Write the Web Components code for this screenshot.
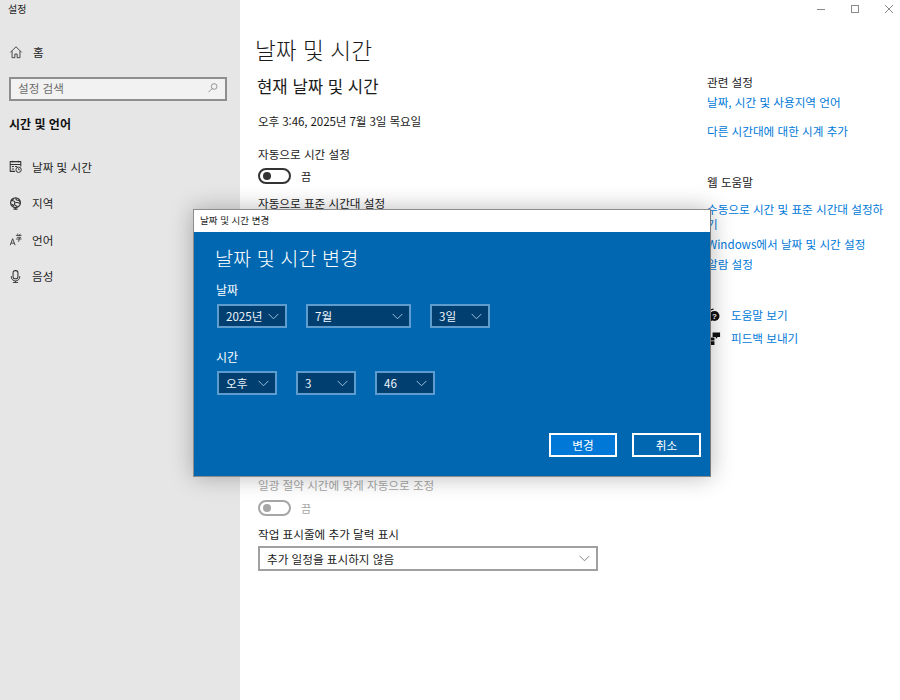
<!DOCTYPE html>
<html lang="ko">
<head>
<meta charset="utf-8">
<title>설정</title>
<style>
  html, body { margin: 0; height: 100%; }
  body { font-family: "Noto Sans CJK KR", "Noto Sans", sans-serif; color: #1a1a1a; background: #fff; overflow: hidden; }
</style>
</head>
<body>
<settings-window>
  <side-nav slot="nav"></side-nav>
  <date-pane slot="main"></date-pane>
  <related-pane slot="aside"></related-pane>
  <window-controls slot="controls"></window-controls>
  <change-dialog slot="dialog"></change-dialog>
</settings-window>

<script>
const icons = {
  home: '<path d="M1.5 8.5 8 2l6.5 6.5M3.5 7v7.5h3.2v-4.2h2.6v4.2h3.2V7" fill="none" stroke="currentColor"/>',
  search: '<circle cx="9.5" cy="6" r="3.8" fill="none" stroke="currentColor"/><path d="M6.8 8.8 2 13.6" stroke="currentColor" fill="none"/>',
  clock: '<path d="M7.500 14H1.500V2h13v6M1.500 5.500h13M4.500 .8v2.400M11.500 .8v2.400M3.500 8h2.500M7.500 8h2.500M3.500 11h2.500" fill="none" stroke="currentColor" stroke-width="1.300"/><circle cx="11.800" cy="12" r="3.300" fill="#e6e6e6" stroke="currentColor" stroke-width="1.200"/><path d="M11.800 10v2h1.600" fill="none" stroke="currentColor"/>',
  region: '<circle cx="8" cy="7" r="6" fill="none" stroke="currentColor" stroke-width="1.500"/><path d="M3 4c2 1 3 .5 4 2s-1 2 0 3.500 3 1 3.500 3M9 1.500c-1 1.500 0 2.500 1.500 2.500s2.500 .5 3 2M5 2c.5 1.500-.5 2-2.400 2.500M8 7c1.500-.5 3-.5 5.800 1M3 9c1.500 0 2.500.5 3 2.500" fill="none" stroke="currentColor" stroke-width="1.400"/><path d="M5.500 15h5M8 13v2" stroke="currentColor" stroke-width="1.500"/>',
  lang: '<path d="M1.500 15 4.500 7 7.500 15M2.700 12.500h3.600" fill="none" stroke="currentColor" stroke-width="1.100"/><path d="M8.500 3h7M10.500 .8l.8 2.200M13.700 .8l-.8 2.200M9.800 5.300h4.700l-2.200 1.700v3l-1.300.4M8.500 7.400h7" fill="none" stroke="currentColor"/>',
  mic: '<rect x="5" y=".8" width="6" height="10" rx="2.500" fill="none" stroke="currentColor" stroke-width="1.300"/><path d="M2.800 7.500v1a5.200 5 0 0 0 10.400 0v-1M8 13.500V15.500M4.800 15.500h6.400" fill="none" stroke="currentColor" stroke-width="1.200"/>',
  help: '<circle cx="9" cy="8.500" r="5.400" fill="currentColor"/><path d="M4.500 12 3.500 15l3.500-2z" fill="currentColor"/><text x="9" y="11.500" font-size="8.500" font-weight="700" text-anchor="middle" fill="#fff" font-family="Liberation Sans">?</text><path d="M2 8A6.500 6.500 0 0 1 8 1.200" fill="none" stroke="currentColor" stroke-width="1.200"/>',
  feedback: '<path d="M7 1.500h8v5h-2.500L10.500 8.500V6.500H7zM3.500 7H9v3H3.500zM3.500 11H9v3.800H3.500z" fill="currentColor"/>'
};
const svg = (name, size = 16) => `<svg width="${size}" height="${size}" viewBox="0 0 16 16" aria-hidden="true">${icons[name]}</svg>`;
const chevron = (w = 12) => `<svg width="${w}" height="7" viewBox="0 0 12 7" aria-hidden="true"><path d="M.7.7 6 6 11.300.7" fill="none" stroke="currentColor"/></svg>`;

class SettingsWindow extends HTMLElement {
  connectedCallback() {
    this.attachShadow({ mode: "open" }).innerHTML = `
      <style>
        :host { display: grid; grid-template-columns: 240px 467px 193px; width: 900px; height: 700px; position: relative; overflow: hidden; }
        .controls { position: absolute; top: 0; right: -7px; }
        .dialog { position: absolute; left: 193px; top: 209px; }
      </style>
      <slot name="nav"></slot>
      <slot name="main"></slot>
      <slot name="aside"></slot>
      <div class="controls"><slot name="controls"></slot></div>
      <div class="dialog"><slot name="dialog"></slot></div>`;
  }
}

class SideNav extends HTMLElement {
  connectedCallback() {
    const items = [["clock", "날짜 및 시간"], ["region", "지역"], ["lang", "언어"], ["mic", "음성"]];
    this.attachShadow({ mode: "open" }).innerHTML = `
      <style>
        :host { display: block; background: #e6e6e6; height: 700px; font-size: 11.600px; color: #1f1f1f; }
        .app { font-size: 10px; line-height: 14px; padding: 2px 0 0 8px; height: 16px; }
        .row { display: flex; align-items: center; height: 36.500px; padding-left: 9px; gap: 10px; }
        .row svg { width: 13px; height: 13px; flex: none; color: #333; }
        .home { margin-top: 16px; }
        .home svg { width: 14px; height: 14px; }
        .search { display: flex; align-items: center; justify-content: space-between; box-sizing: border-box; margin: 6px 13px 0 9px; height: 24px; border: 2px solid #8e8e8e; background: #f2f2f2; color: #6d6d6d; padding: 0 6px 1px 7px; }
        .search svg { width: 12px; height: 12px; color: #777; }
        h2 { font-size: 12px; font-weight: 700; line-height: 16px; margin: 15px 0 17px 9px; color: #111; }
      </style>
      <div class="app">설정</div>
      <div class="row home">${svg("home")}<span>홈</span></div>
      <div class="search"><span>설정 검색</span>${svg("search")}</div>
      <h2>시간 및 언어</h2>
      ${items.map(([i, t]) => `<div class="row">${svg(i)}<span>${t}</span></div>`).join("")}`;
  }
}

class ToggleRow extends HTMLElement {
  connectedCallback() {
    this.attachShadow({ mode: "open" }).innerHTML = `
      <style>
        :host { display: flex; align-items: center; gap: 10px; height: 20px; font-size: 11px; color: var(--fg, #1a1a1a); }
        .track { box-sizing: border-box; width: 33px; height: 16px; border: 2px solid var(--fg, #333); border-radius: 8px; padding: 2px 0 0 3px; }
        .knob { width: 8px; height: 8px; border-radius: 50%; background: var(--fg, #333); }
      </style>
      <div class="track"><div class="knob"></div></div><slot></slot>`;
  }
}

class DatePane extends HTMLElement {
  connectedCallback() {
    this.attachShadow({ mode: "open" }).innerHTML = `
      <style>
        :host { display: block; padding: 0 0 0 16px; background: #fff; }
        h1 { font-size: 22.700px; font-weight: 300; line-height: 32px; margin: 34px 0 0 -1px; color: #1a1a1a; }
        h2 { font-size: 16.700px; font-weight: 400; line-height: 22px; margin: 9px 0 0 1px; color: #1a1a1a; }
        .body { margin-left: 2px; font-size: 11.600px; }
        .now { line-height: 16px; margin-top: 16px; letter-spacing: -.12px; }
        .label { line-height: 16px; }
        .a { margin-top: 17px; }
        toggle-row { margin-top: 4px; }
        .b { margin-top: 9px; }
        .off { margin-top: 266px; color: #a6a6a6; --fg: #a6a6a6; }
        .off toggle-row { margin-top: 5px; }
        .cal { margin-top: 8px; }
        .select { display: flex; align-items: center; justify-content: space-between; box-sizing: border-box; width: 340px; height: 25px; margin-top: 4px; padding: 0 6px 0 7px; border: 2px solid #a0a0a0; background: #fff; }
        .select svg { color: #777; }
      </style>
      <h1>날짜 및 시간</h1>
      <h2>현재 날짜 및 시간</h2>
      <div class="body">
        <div class="now">오후 3:46, 2025년 7월 3일 목요일</div>
        <div class="label a">자동으로 시간 설정</div>
        <toggle-row>끔</toggle-row>
        <div class="label b">자동으로 표준 시간대 설정</div>
        <div class="off">
          <div class="label">일광 절약 시간에 맞게 자동으로 조정</div>
          <toggle-row>끔</toggle-row>
        </div>
        <div class="label cal">작업 표시줄에 추가 달력 표시</div>
        <div class="select"><span>추가 일정을 표시하지 않음</span>${chevron(11)}</div>
      </div>`;
  }
}

class RelatedPane extends HTMLElement {
  connectedCallback() {
    this.attachShadow({ mode: "open" }).innerHTML = `
      <style>
        :host { display: block; background: #fff; font-size: 11.600px; line-height: 15px; padding-right: 12px; color: #0078d7; }
        h3 { font-size: 11.600px; font-weight: 400; line-height: 16px; margin: 0; color: #1a1a1a; }
        .rel { margin-top: 74px; }
        .link { display: block; color: #0078d7; }
        .l1 { margin-top: 5px; }
        .l2 { margin-top: 14px; }
        .web { margin-top: 35px; }
        .w1 { margin-top: 12px; }
        .w2, .w3 { margin-top: 5px; }
        .help { display: flex; align-items: center; gap: 10px; }
        .help svg { width: 15px; height: 15px; color: #111; flex: none; }
        .h1 { margin-top: 36px; margin-left: -1px; }
        .h2 { margin-top: 8px; margin-left: -1px; }
      </style>
      <h3 class="rel">관련 설정</h3>
      <div class="link l1">날짜, 시간 및 사용지역 언어</div>
      <div class="link l2">다른 시간대에 대한 시계 추가</div>
      <h3 class="web">웹 도움말</h3>
      <div class="link w1">수동으로 시간 및 표준 시간대 설정하<br>기</div>
      <div class="link w2">Windows에서 날짜 및 시간 설정</div>
      <div class="link w3">알람 설정</div>
      <div class="link help h1">${svg("help")}<span>도움말 보기</span></div>
      <div class="link help h2">${svg("feedback")}<span>피드백 보내기</span></div>`;
  }
}

class WindowControls extends HTMLElement {
  connectedCallback() {
    this.attachShadow({ mode: "open" }).innerHTML = `
      <style>
        :host { display: flex; color: #8a8a8a; }
        div { width: 34px; height: 18px; display: flex; align-items: center; justify-content: center; }
        svg { width: 10px; height: 10px; }
      </style>
      <div><svg viewBox="0 0 10 10"><path d="M1 5.500h8" stroke="currentColor" fill="none"/></svg></div>
      <div><svg viewBox="0 0 10 10"><rect x="1.500" y="1.500" width="7" height="7" stroke="currentColor" fill="none"/></svg></div>
      <div style="margin-right:1px"><svg viewBox="0 0 10 10"><path d="M1 1l8 8M9 1l-8 8" stroke="currentColor" fill="none"/></svg></div>`;
  }
}

class ComboBox extends HTMLElement {
  connectedCallback() {
    this.attachShadow({ mode: "open" }).innerHTML = `
      <style>
        :host { display: flex; align-items: center; justify-content: space-between; box-sizing: border-box; height: 24px; padding: 0 6px 0 7px; border: 2px solid #5c9ccf; background: #003f70; color: #eef5fb; font-size: 11.600px; }
        svg { color: #a9cbe6; }
      </style>
      <slot></slot>${chevron(11)}`;
  }
}

class ChangeDialog extends HTMLElement {
  connectedCallback() {
    this.attachShadow({ mode: "open" }).innerHTML = `
      <style>
        :host { display: block; box-sizing: border-box; width: 518px; height: 268px; border: 1px solid #8c8c8c; border-right-color: #7a7a7a; box-shadow: 0 0 22px rgba(0,0,0,.28); background: #0067b0; color: #fff; }
        .bar { height: 22px; background: #fff; color: #1a1a1a; font-size: 9.500px; line-height: 21px; padding-left: 6px; }
        .content { padding: 0 9px 0 22px; }
        h1 { font-size: 19.700px; font-weight: 300; line-height: 26px; margin: 13px 0 0 -1px; }
        .lab { font-size: 12px; line-height: 16px; }
        .date { margin-top: 11px; }
        .time { margin-top: 21px; }
        .line { display: flex; margin: 6px 0 0 1px; }
        .btns { display: flex; justify-content: flex-end; gap: 15px; margin-top: 38px; }
        button { box-sizing: border-box; height: 24px; border: 2px solid #fff; color: #fff; background: transparent; font: 11.600px "Noto Sans CJK KR", sans-serif; padding: 0; }
        .ok { width: 68px; background: #0078d7; }
        .no { width: 69px; }
      </style>
      <div class="bar">날짜 및 시간 변경</div>
      <div class="content">
        <h1>날짜 및 시간 변경</h1>
        <div class="lab date">날짜</div>
        <div class="line">
          <combo-box style="width:70px">2025년</combo-box>
          <combo-box style="width:105px;margin-left:19px">7월</combo-box>
          <combo-box style="width:60px;margin-left:19px">3일</combo-box>
        </div>
        <div class="lab time">시간</div>
        <div class="line">
          <combo-box style="width:60px">오후</combo-box>
          <combo-box style="width:60px;margin-left:19px">3</combo-box>
          <combo-box style="width:60px;margin-left:19px">46</combo-box>
        </div>
        <div class="btns"><button class="ok">변경</button><button class="no">취소</button></div>
      </div>`;
  }
}

customElements.define("settings-window", SettingsWindow);
customElements.define("side-nav", SideNav);
customElements.define("toggle-row", ToggleRow);
customElements.define("date-pane", DatePane);
customElements.define("related-pane", RelatedPane);
customElements.define("window-controls", WindowControls);
customElements.define("combo-box", ComboBox);
customElements.define("change-dialog", ChangeDialog);
</script>
</body>
</html>
